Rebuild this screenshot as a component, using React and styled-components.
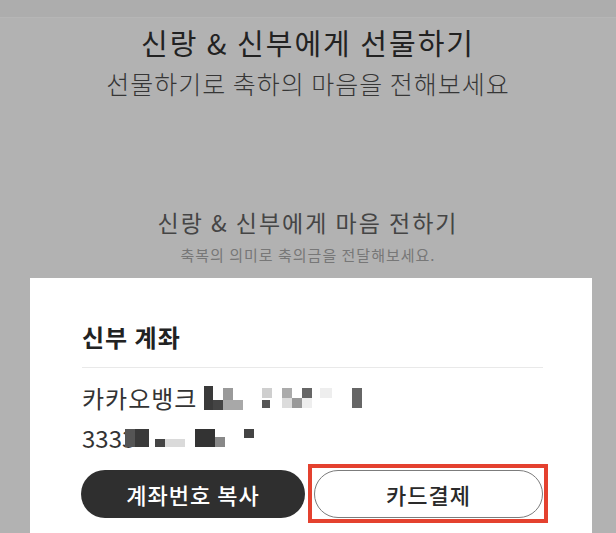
import React from "react";
import styled, { createGlobalStyle } from "styled-components";

const GlobalStyle = createGlobalStyle`
  html, body {
    margin: 0;
    padding: 0;
    background: #b2b2b2;
  }
  body {
    font-family: "Noto Sans CJK KR", "Noto Sans", sans-serif;
    color: #222;
    overflow: hidden;
  }
`;

const bankMosaic = [
  { x: 0, y: 0, w: 9, h: 24, c: "#3a3a3a" },
  { x: 9, y: 14, w: 10, h: 10, c: "#444" },
  { x: 19, y: 2, w: 10, h: 12, c: "#9a9a9a" },
  { x: 19, y: 14, w: 20, h: 10, c: "#a8a8a8" },
  { x: 58, y: 2, w: 10, h: 10, c: "#cfcfcf" },
  { x: 58, y: 14, w: 8, h: 8, c: "#555" },
  { x: 78, y: 2, w: 10, h: 10, c: "#ababab" },
  { x: 98, y: 2, w: 10, h: 10, c: "#666" },
  { x: 78, y: 12, w: 10, h: 10, c: "#dcdcdc" },
  { x: 88, y: 12, w: 10, h: 10, c: "#999" },
  { x: 98, y: 12, w: 10, h: 10, c: "#eee" },
  { x: 116, y: 2, w: 12, h: 10, c: "#eeeeee" },
  { x: 148, y: 2, w: 10, h: 20, c: "#666" },
];

const numberMosaic = [
  { x: 0, y: 0, w: 10, h: 18, c: "#555" },
  { x: 10, y: 0, w: 14, h: 18, c: "#3a3a3a" },
  { x: 30, y: 10, w: 10, h: 8, c: "#444" },
  { x: 40, y: 10, w: 20, h: 8, c: "#dadada" },
  { x: 70, y: 0, w: 20, h: 18, c: "#333" },
  { x: 90, y: 8, w: 10, h: 10, c: "#888" },
  { x: 119, y: 0, w: 10, h: 9, c: "#444" },
];

function Mosaic({ cells, width, height }) {
  return (
    <MosaicSvg width={width} height={height} viewBox={`0 0 ${width} ${height}`}>
      {cells.map((cell, i) => (
        <rect key={i} x={cell.x} y={cell.y} width={cell.w} height={cell.h} fill={cell.c} />
      ))}
    </MosaicSvg>
  );
}

export default function App() {
  return (
    <Page>
      <GlobalStyle />
      <StatusBand />

      <GiftHeader>
        <GiftTitle>신랑 &amp; 신부에게 선물하기</GiftTitle>
        <GiftSubtitle>선물하기로 축하의 마음을 전해보세요</GiftSubtitle>
      </GiftHeader>

      <SectionHeader>
        <SectionTitle>신랑 &amp; 신부에게 마음 전하기</SectionTitle>
        <SectionNote>축복의 의미로 축의금을 전달해보세요.</SectionNote>
      </SectionHeader>

      <AccountCard>
        <CardTitle>신부 계좌</CardTitle>
        <Divider />
        <AccountLine>
          카카오뱅크
          <Mosaic cells={bankMosaic} width={160} height={24} />
        </AccountLine>
        <AccountLine $digits>
          3333
          <Mosaic cells={numberMosaic} width={130} height={18} />
        </AccountLine>
        <ButtonRow>
          <CopyButton>계좌번호 복사</CopyButton>
          <Highlight>
            <CardButton>카드결제</CardButton>
          </Highlight>
        </ButtonRow>
      </AccountCard>
    </Page>
  );
}

const Page = styled.div`
  width: 616px;
  height: 533px;
  display: flex;
  flex-direction: column;
  overflow: hidden;
`;

const StatusBand = styled.div`
  height: 17px;
  background: #adadad;
  border-bottom: 1px solid #b6b6b6;
  flex-shrink: 0;
`;

const GiftHeader = styled.header`
  display: flex;
  flex-direction: column;
  align-items: center;
  padding-top: 6px;
`;

const GiftTitle = styled.h1`
  margin: 0;
  font-size: 29px;
  line-height: 36px;
  font-weight: 400;
  letter-spacing: 2px;
  color: #222;
`;

const GiftSubtitle = styled.p`
  margin: 6px 0 0;
  font-size: 25px;
  line-height: 34px;
  font-weight: 300;
  letter-spacing: 1px;
  color: #363636;
`;

const SectionHeader = styled.div`
  display: flex;
  flex-direction: column;
  align-items: center;
  margin-top: 107px;
`;

const SectionTitle = styled.h2`
  margin: 0;
  font-size: 23px;
  line-height: 30px;
  font-weight: 400;
  letter-spacing: 2px;
  color: #454545;
`;

const SectionNote = styled.p`
  margin: 8px 0 0;
  font-size: 15px;
  line-height: 20px;
  font-weight: 400;
  letter-spacing: 1px;
  color: #777;
`;

const AccountCard = styled.section`
  flex: 1;
  margin: 13px 24px 0 30px;
  padding: 44px 49px 0 52px;
  background: #fff;
`;

const CardTitle = styled.h3`
  margin: 0;
  font-size: 24px;
  line-height: 30px;
  font-weight: 700;
  letter-spacing: 1px;
  color: #222;
`;

const Divider = styled.hr`
  margin: 15px 0 0;
  border: 0;
  height: 1px;
  background: #e9e9e9;
`;

const AccountLine = styled.div`
  display: flex;
  align-items: center;
  gap: ${(p) => (p.$digits ? "0" : "7px")};
  font-size: 24px;
  line-height: 40px;
  color: #333;
  margin-top: ${(p) => (p.$digits ? "0" : "10px")};
  letter-spacing: ${(p) => (p.$digits ? "0" : "1px")};

  svg {
    margin-left: ${(p) => (p.$digits ? "-10px" : "0")};
  }
`;

const MosaicSvg = styled.svg`
  display: block;
  flex-shrink: 0;
`;

const ButtonRow = styled.div`
  display: flex;
  align-items: center;
  gap: 3px;
  margin-top: 6px;
  margin-left: -1px;
`;

const PillButton = styled.button`
  flex-shrink: 0;
  height: 48px;
  border-radius: 24px;
  font-family: inherit;
  font-size: 22px;
  font-weight: 500;
  letter-spacing: 1px;
  cursor: pointer;
  display: flex;
  align-items: center;
  justify-content: center;
  padding: 0;
`;

const CopyButton = styled(PillButton)`
  width: 224px;
  background: #2f2f2f;
  border: 0;
  color: #fff;
`;

const Highlight = styled.div`
  flex-shrink: 0;
  border: 4px solid #e4412f;
  padding: 2px 1px 1px 2px;
  display: flex;
`;

const CardButton = styled(PillButton)`
  width: 229px;
  background: #fff;
  border: 1.5px solid #7c7c7c;
  color: #2a2a2a;
`;
